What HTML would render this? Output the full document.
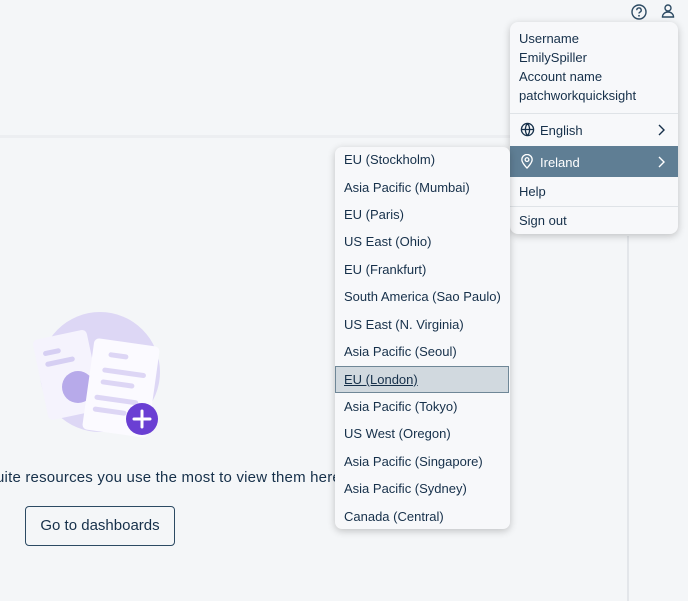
<!DOCTYPE html>
<html><head><style>
body{margin:0;width:688px;height:601px;background:#f4f6f8;font-family:"Liberation Sans",sans-serif;color:#16304a;position:relative;overflow:hidden}
.hline{position:absolute;left:0;top:135px;width:628px;height:3px;background:#eceef1}
.vline{position:absolute;left:627px;top:236px;width:2px;height:365px;background:#e3e6ea}
.menu{position:absolute;left:510px;top:22px;width:168px;height:212px;background:#f7f8fa;border-radius:8px;box-shadow:0 2px 8px rgba(0,0,0,.22);font-size:13px}
.menu .t{position:absolute;left:9px}
.sep{position:absolute;left:0;width:168px;height:1px;background:#dfe3e7}
.row{position:absolute;left:0;width:168px;height:31px}
.reg{position:absolute;left:335px;top:147px;width:175px;height:382px;background:#f7f8fa;border-radius:7px;box-shadow:0 2px 8px rgba(0,0,0,.22);font-size:13px}
.reg div{position:absolute;left:9px;line-height:16px}
.btn{position:absolute;left:25px;top:506px;width:148px;height:38px;border:1px solid #2c4a63;border-radius:4px;font-size:15px;line-height:38px;text-align:center}
.msg{position:absolute;left:-4px;top:469px;font-size:15px;white-space:nowrap;letter-spacing:0.2px}
</style></head><body>
<div class="hline"></div><div class="vline"></div>
<svg style="position:absolute;left:630px;top:3px" width="18" height="18" viewBox="0 0 18 18"><circle cx="9" cy="9" r="7" fill="none" stroke="#2c4a63" stroke-width="1.4"/><path d="M6.8 7.2a2.2 2.2 0 1 1 3 2c-.6.3-.8.7-.8 1.3" fill="none" stroke="#2c4a63" stroke-width="1.4"/><circle cx="9" cy="12.8" r=".9" fill="#2c4a63"/></svg>
<svg style="position:absolute;left:660px;top:3px" width="16" height="16" viewBox="0 0 16 16"><circle cx="8" cy="5" r="3" fill="none" stroke="#2c4a63" stroke-width="1.4"/><path d="M2.5 14c0-3 2.5-5 5.5-5s5.5 2 5.5 5z" fill="none" stroke="#2c4a63" stroke-width="1.4"/></svg>
<svg style="position:absolute;left:30px;top:312px" width="140" height="130" viewBox="0 0 140 130">
<circle cx="70" cy="60" r="60" fill="#ddd7f5"/>
<rect x="10" y="22" width="55" height="82" rx="5" fill="#f5f3fd" transform="rotate(-12 37 63)"/>
<rect x="18" y="35" width="18" height="5" rx="2.5" fill="#d6cff3" transform="rotate(-12 37 63)"/>
<rect x="18" y="46" width="30" height="5" rx="2.5" fill="#d6cff3" transform="rotate(-12 37 63)"/>
<circle cx="48" cy="75" r="16" fill="#b7aaea"/>
<rect x="58" y="30" width="66" height="92" rx="5" fill="#fbfaff" transform="rotate(8 91 76)"/>
<rect x="74" y="42" width="20" height="5" rx="2.5" fill="#ddd6f5" transform="rotate(8 91 76)"/>
<rect x="70" y="58" width="44" height="5" rx="2.5" fill="#ddd6f5" transform="rotate(8 91 76)"/>
<rect x="70" y="70" width="34" height="5" rx="2.5" fill="#ddd6f5" transform="rotate(8 91 76)"/>
<rect x="66" y="86" width="44" height="5" rx="2.5" fill="#ddd6f5" transform="rotate(8 91 76)"/>
<rect x="66" y="98" width="34" height="5" rx="2.5" fill="#ddd6f5" transform="rotate(8 91 76)"/>
<circle cx="112" cy="107" r="16" fill="#6a3fd3"/>
<path d="M112 99v16M104 107h16" stroke="#fff" stroke-width="3" stroke-linecap="round"/>
</svg>
<div class="msg">uite resources you use the most to view them here</div>
<div class="btn">Go to dashboards</div>
<div class="menu">
<div class="t" style="top:9px">Username</div>
<div class="t" style="top:28px">EmilySpiller</div>
<div class="t" style="top:47px">Account name</div>
<div class="t" style="top:66px">patchworkquicksight</div>
<div class="sep" style="top:91px"></div>
<svg style="position:absolute;left:10px;top:100px" width="15" height="15" viewBox="0 0 16 16"><circle cx="8" cy="8" r="6.5" fill="none" stroke="#16304a" stroke-width="1.4"/><path d="M1.5 8h13M8 1.5c-3 3.5-3 9.5 0 13M8 1.5c3 3.5 3 9.5 0 13" fill="none" stroke="#16304a" stroke-width="1.4"/></svg>
<div class="t" style="left:30px;top:101px">English</div>
<svg style="position:absolute;left:146px;top:102px" width="10" height="12" viewBox="0 0 10 12"><path d="M3 1l5 5-5 5" fill="none" stroke="#16304a" stroke-width="1.4"/></svg>
<div class="row" style="top:124px;background:#5f7e94;color:#fff">
<svg style="position:absolute;left:10px;top:8px" width="14" height="15" viewBox="0 0 14 16"><path d="M7 15s-5.5-5.5-5.5-9a5.5 5.5 0 0 1 11 0c0 3.5-5.5 9-5.5 9z" fill="none" stroke="#fff" stroke-width="1.4"/><circle cx="7" cy="6" r="2" fill="none" stroke="#fff" stroke-width="1.4"/></svg>
<div style="position:absolute;left:30px;top:9px">Ireland</div>
<svg style="position:absolute;left:146px;top:10px" width="10" height="12" viewBox="0 0 10 12"><path d="M3 1l5 5-5 5" fill="none" stroke="#fff" stroke-width="1.4"/></svg>
</div>
<div class="t" style="top:162px">Help</div>
<div class="sep" style="top:184px"></div>
<div class="t" style="top:191px">Sign out</div>
</div>
<div class="reg">
<div style="top:5px">EU (Stockholm)</div>
<div style="top:33px">Asia Pacific (Mumbai)</div>
<div style="top:60px">EU (Paris)</div>
<div style="top:87px">US East (Ohio)</div>
<div style="top:115px">EU (Frankfurt)</div>
<div style="top:142px">South America (Sao Paulo)</div>
<div style="top:170px">US East (N. Virginia)</div>
<div style="top:197px">Asia Pacific (Seoul)</div>
<div style="left:0;top:219px;width:172px;height:25px;background:#d1d9df;border:1px solid #6f8797"></div>
<div style="top:225px;text-decoration:underline">EU (London)</div>
<div style="top:252px">Asia Pacific (Tokyo)</div>
<div style="top:279px">US West (Oregon)</div>
<div style="top:307px">Asia Pacific (Singapore)</div>
<div style="top:334px">Asia Pacific (Sydney)</div>
<div style="top:362px">Canada (Central)</div>
</div>
</body></html>
